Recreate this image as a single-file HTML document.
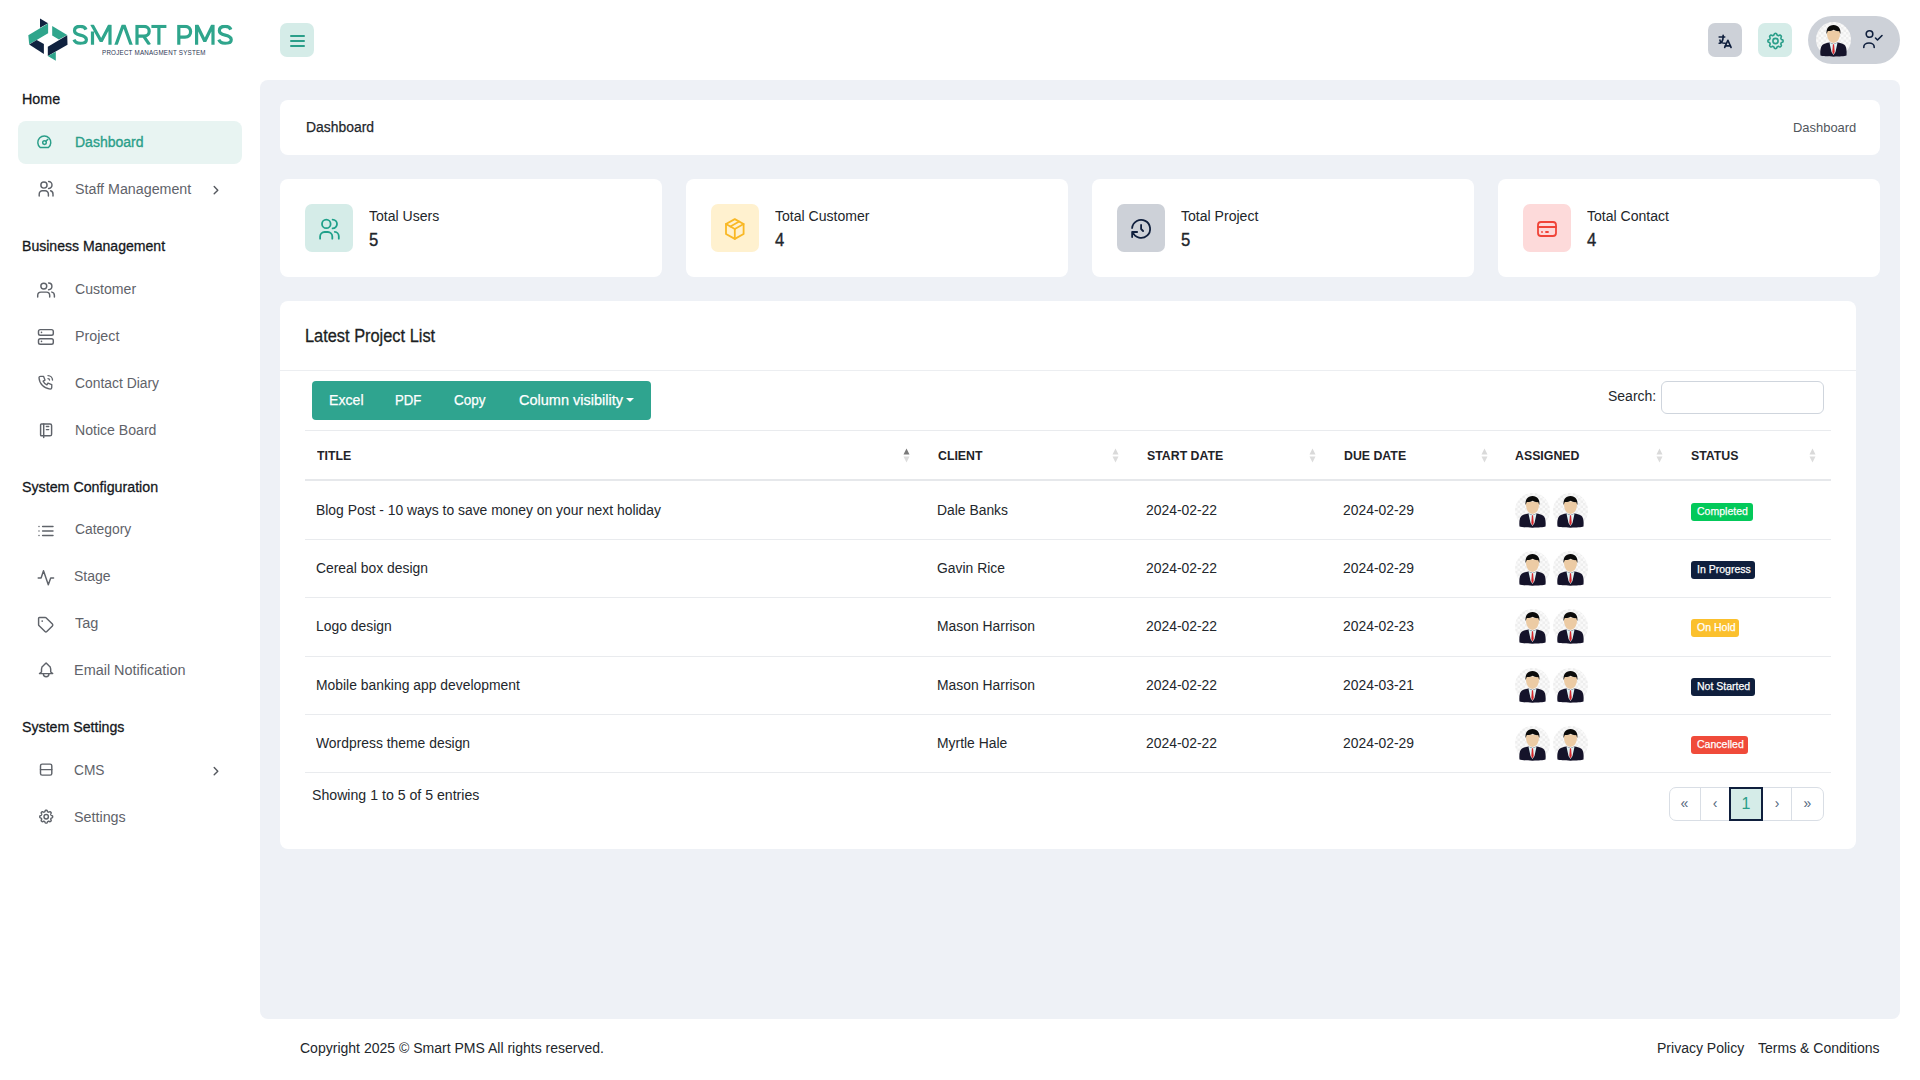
<!DOCTYPE html>
<html>
<head>
<meta charset="utf-8">
<style>
*{box-sizing:border-box;margin:0;padding:0}
html,body{width:1920px;height:1080px;overflow:hidden;background:#fff;font-family:"Liberation Sans",sans-serif;color:#212529}
.abs{position:absolute}
.t{position:absolute;white-space:nowrap;line-height:normal;transform-origin:0 0}
svg.ic{fill:none;stroke:currentColor;stroke-linecap:round;stroke-linejoin:round}
.sec{position:absolute;left:22px;font-size:15px;line-height:18px;font-weight:400;-webkit-text-stroke:0.35px #15181c;color:#15181c;white-space:nowrap;letter-spacing:-0.5px}
.mi{position:absolute;left:18px;width:224px;height:43px;border-radius:8px}
.mi.act{background:#e8f4f2}
.mt{position:absolute;left:75px;font-size:15px;line-height:18px;white-space:nowrap;letter-spacing:-0.45px}
.hbtn{position:absolute;top:23px;width:34px;height:34px;border-radius:7px}
.main{position:absolute;left:260px;top:80px;width:1640px;height:939px;background:#eef1f6;border-radius:8px}
.card{position:absolute;background:#fff;border-radius:8px}
.stat .box{position:absolute;left:25px;top:25px;width:48px;height:48px;border-radius:7px}
.stat .box svg{position:absolute;left:0;top:0;width:48px;height:48px;stroke-width:1.8}
.stat .lbl{position:absolute;left:89px;top:27px;font-size:15px;line-height:18px;color:#22262b;white-space:nowrap;letter-spacing:-0.5px}
.stat .val{position:absolute;left:89px;top:52px;font-size:17px;line-height:20px;font-weight:400;-webkit-text-stroke:0.2px #22262b;color:#22262b}
.th{position:absolute;top:449px;font-size:12.5px;line-height:15px;font-weight:700;color:#1f2328;white-space:nowrap;letter-spacing:-0.2px}
.sort{position:absolute;top:447px;width:7px;height:16px}
.td{position:absolute;font-size:15px;line-height:18px;color:#23272c;white-space:nowrap;letter-spacing:-0.5px}
.hr{position:absolute;left:305px;width:1526px;height:1px;background:#e9ebee}
.badge{position:absolute;height:18px;border-radius:3px;color:#fff;font-size:11px;font-weight:400;-webkit-text-stroke:0.3px #fff;padding:0 5.5px;line-height:18px;white-space:nowrap;letter-spacing:-0.2px}
.av{position:absolute;width:35px;height:35px}
.pg{position:absolute;top:787px;height:34px;color:#51657a;font-size:14px;text-align:center;line-height:33px}
.foot{position:absolute;top:1040px;font-size:15px;line-height:18px;color:#23272c;white-space:nowrap;letter-spacing:-0.46px}
</style>
</head>
<body>
<svg width="0" height="0" style="position:absolute">
  <defs>
    <pattern id="chk" width="5" height="5" patternUnits="userSpaceOnUse">
      <rect width="5" height="5" fill="#fafafa"/>
      <rect width="2.5" height="2.5" fill="#eeeeee"/>
      <rect x="2.5" y="2.5" width="2.5" height="2.5" fill="#eeeeee"/>
    </pattern>
    <symbol id="avatar" viewBox="0 0 35 35">
      <circle cx="17.5" cy="17.5" r="17.5" fill="url(#chk)"/>
      <path d="M4.5 33.5 C4 29 4.5 24 7 22.5 C9 21.3 11 21 13.5 20.5 L17.5 22 L21.5 20.5 C24 21 26 21.3 28 22.5 C30.5 24 31 29 30.5 33.5 C27 35 8 35 4.5 33.5Z" fill="#15132a"/>
      <path d="M13.5 20.8 L17.5 22 L21.5 20.8 L19.5 30 L17.5 33 L15.5 30Z" fill="#dff3f5"/>
      <path d="M16.9 22.3 L18.1 22.3 L18.7 30 L17.5 32.5 L16.3 30Z" fill="#d8262b"/>
      <path d="M11 8.5C10.6 13 11.6 17.5 14.2 19.6C15.6 20.7 16.5 21 17.5 21C18.5 21 19.4 20.7 20.8 19.6C23.4 17.5 24.4 13 24 8.5Z" fill="#eccba4"/>
      <path d="M10.6 12C10 6.5 12.6 2.9 17.5 2.9C22.4 2.9 25 6.5 24.4 12C23.8 11 23.6 9.8 23.2 9C21.5 9.6 19 8.2 17.8 7.7C16 8.6 13.5 9.4 11.8 9C11.4 9.9 11 11 10.6 12Z" fill="#0b0b0b"/>
    </symbol>
  </defs>
</svg>
<svg class="abs" style="left:0;top:0" width="260" height="80" viewBox="0 0 260 80">
  <polygon points="40,18.6 48.1,23.3 40,27.8" fill="#10223f"/>
  <polygon points="48.1,23.6 48.1,33.3 36.7,40 29.2,44.2 28.3,35.3 40,28.3" fill="#2fa58c"/>
  <polygon points="29.2,44.4 36.7,40 43.9,43.9 43.9,53.9" fill="#10223f"/>
  <polygon points="52.2,26.1 67.2,35 58.9,39.4 52.2,35.6" fill="#2fa58c"/>
  <polygon points="67.2,35.3 67.5,44.7 47.8,56.1 47.8,46.7" fill="#10223f"/>
  <polygon points="47.8,56.1 55.8,51.7 55.8,60.8" fill="#2fa58c"/>
</svg>
<svg class="abs" style="left:0;top:0" width="260" height="80" viewBox="0 0 260 80" fill="none" stroke="#2fa58c" stroke-width="3.2"><defs><clipPath id="capc"><rect x="60" y="24.8" width="190" height="20"/></clipPath></defs><g clip-path="url(#capc)">
  <path d="M86 29.6C85.1 27.3 83.2 26.4 80.3 26.4C76.6 26.4 74.5 28.2 74.5 30.7C74.5 33.5 77.2 34.4 80.3 35.1C83.8 35.9 86.4 36.9 86.4 39.7C86.4 42.1 84.3 43.3 80.3 43.3C77 43.3 74.9 42.1 74 39.6"/>
  <path d="M92.5 46V31.5M91.6 24L101.2 41.2L110 24.5V46" stroke-linejoin="bevel"/>
  <path d="M115.6 46L123.6 24L131.5 46" stroke-linejoin="bevel"/>
  <path d="M137 46V26.4H144C147.4 26.4 149.2 28.6 149.2 31.2C149.2 33.9 147.4 36.1 144 36.1H137M143.6 36.1L149.6 44.8"/>
  <path d="M151.4 26.4H166.4M158.9 26.4V46"/>
  <path d="M178.8 46V26.4H185C188.7 26.4 190.6 28.8 190.6 31.8C190.6 34.8 188.7 37.2 185 37.2H178.8"/>
  <path d="M196.6 46V24.5L204.8 41.2L213 24.5V46" stroke-linejoin="bevel"/>
  <path d="M86 29.6C85.1 27.3 83.2 26.4 80.3 26.4C76.6 26.4 74.5 28.2 74.5 30.7C74.5 33.5 77.2 34.4 80.3 35.1C83.8 35.9 86.4 36.9 86.4 39.7C86.4 42.1 84.3 43.3 80.3 43.3C77 43.3 74.9 42.1 74 39.6" transform="translate(144.85 0)"/>
</svg>
<div class="abs" style="left:101.5px;top:47.5px;font-size:7.2px;line-height:9px;color:#2b3553;white-space:nowrap;letter-spacing:0.25px;transform:scaleX(0.868);transform-origin:0 0">PROJECT MANAGMENT SYSTEM</div>
<div class="t" style="left:22.18px;top:89.88px;font-size:15.5px;font-weight:400;-webkit-text-stroke:0.3px #15181c;color:#15181c;transform:scaleX(0.9225);">Home</div>
<div class="mi act" style="top:121px"></div>
<svg class="ic abs" style="left:32px;top:130px;stroke-width:1.45;color:#2a9e89" width="28" height="28" viewBox="0 0 28 28"><path d="M8.15 17.5A6.5 6.5 0 1 1 16.45 17.5Z"/><circle cx="12.5" cy="12.6" r="1.8"/><path d="M13.9 11.2L15.8 9.4"/></svg>
<div class="t" style="left:74.7px;top:133.13px;font-size:15.5px;font-weight:400;color:#2a9e89;transform:scaleX(0.9041);-webkit-text-stroke:0.35px #2a9e89;">Dashboard</div>
<div class="mi" style="top:168px"></div>
<svg class="ic abs" style="left:32px;top:176px;stroke-width:1.45;color:#5f636a" width="28" height="28" viewBox="0 0 28 28"><circle cx="11.95" cy="9" r="3.1"/><path d="M16.6 5.4a3.4 3.55 0 0 1 0 7.1"/><path d="M7.2 20v-1.8a3.2 3.4 0 0 1 3.2 -3.4h2.8a3.2 3.4 0 0 1 3.2 3.4v1.8"/><path d="M18.6 14.8a3 3.4 0 0 1 2.4 3.4v1.8"/></svg>
<div class="t" style="left:74.68px;top:179.88px;font-size:15.5px;font-weight:400;color:#5f636a;transform:scaleX(0.92);">Staff Management</div>
<svg class="ic abs" style="left:208px;top:182px;stroke-width:1.4;color:#55595f" width="16" height="16" viewBox="0 0 16 16"><path d="M6.2 4.5L9.8 8.2L6.2 11.8"/></svg>
<div class="t" style="left:22.19px;top:236.98px;font-size:15.5px;font-weight:400;-webkit-text-stroke:0.3px #15181c;color:#15181c;transform:scaleX(0.9076);">Business Management</div>
<div class="mi" style="top:268px"></div>
<svg class="ic abs" style="left:32px;top:276px;stroke-width:1.45;color:#5f636a" width="28" height="28" viewBox="0 0 28 28"><circle cx="11.8" cy="10.1" r="2.95"/><path d="M16.6 7a3.3 3.35 0 0 1 0 6.7"/><path d="M5.7 21v-1.6a3.3 3.3 0 0 1 3.3 -3.3h5.4a3.3 3.3 0 0 1 3.3 3.3v1.6"/><path d="M19.8 16.1a3 3.5 0 0 1 2.6 3.4v1.5"/></svg>
<div class="t" style="left:74.69px;top:280.38px;font-size:15.5px;font-weight:400;color:#5f636a;transform:scaleX(0.9091);">Customer</div>
<div class="mi" style="top:315px"></div>
<svg class="ic abs" style="left:32px;top:322px;stroke-width:1.45;color:#5f636a" width="28" height="28" viewBox="0 0 28 28"><rect x="6.5" y="7.6" width="14.8" height="5.7" rx="1.8"/><rect x="6.5" y="16.7" width="14.8" height="5.6" rx="1.8"/><path d="M9.5 10.4h.01M9.5 19.4h.01" stroke-width="1.6"/></svg>
<div class="t" style="left:74.68px;top:326.88px;font-size:15.5px;font-weight:400;color:#5f636a;transform:scaleX(0.9202);">Project</div>
<div class="mi" style="top:362px"></div>
<svg class="ic abs" style="left:32px;top:369px;stroke-width:1.45;color:#5f636a" width="28" height="28" viewBox="0 0 28 28"><g transform="translate(4.75 4.3) scale(0.75)" stroke-width="1.8"><path d="M5 4h4l2 5l-2.5 1.5a11 11 0 0 0 5 5l1.5 -2.5l5 2v4a2 2 0 0 1 -2 2a16 16 0 0 1 -15 -15a2 2 0 0 1 2 -2"/><path d="M15 7a2 2 0 0 1 2 2"/><path d="M15 3a6 6 0 0 1 6 6"/></g></svg>
<div class="t" style="left:74.6px;top:373.78px;font-size:15.5px;font-weight:400;color:#5f636a;transform:scaleX(0.8952);">Contact Diary</div>
<div class="mi" style="top:409px"></div>
<svg class="ic abs" style="left:32px;top:416px;stroke-width:1.45;color:#5f636a" width="28" height="28" viewBox="0 0 28 28"><path d="M9.4 7.9h8.6a1.6 1.6 0 0 1 1.6 1.6v8.7a1.6 1.6 0 0 1 -1.6 1.6h-8.6a0.8 0.8 0 0 1 -0.8 -0.8v-10.3a0.8 0.8 0 0 1 0.8 -0.8Z"/><path d="M11.7 7.9v13.5"/><path d="M14.4 10.5h2.3M14.4 13.6h2.3"/></svg>
<div class="t" style="left:74.69px;top:420.88px;font-size:15.5px;font-weight:400;color:#5f636a;transform:scaleX(0.9091);">Notice Board</div>
<div class="t" style="left:22.18px;top:478.08px;font-size:15.5px;font-weight:400;-webkit-text-stroke:0.3px #15181c;color:#15181c;transform:scaleX(0.9184);">System Configuration</div>
<div class="mi" style="top:508px"></div>
<svg class="ic abs" style="left:32px;top:515px;stroke-width:1.45;color:#5f636a" width="28" height="28" viewBox="0 0 28 28"><path d="M10.6 11.4h10.4M10.6 15.9h10.4M10.6 20.5h10.4M7 11.4h.01M7 15.9h.01M7 20.5h.01"/></svg>
<div class="t" style="left:74.7px;top:520.38px;font-size:15.5px;font-weight:400;color:#5f636a;transform:scaleX(0.8952);">Category</div>
<div class="mi" style="top:555px"></div>
<svg class="ic abs" style="left:32px;top:562px;stroke-width:1.45;color:#5f636a" width="28" height="28" viewBox="0 0 28 28"><path d="M6.2 15.9h2.9l2.4 -7.1l4.8 14l2.4 -6.9h2.9"/></svg>
<div class="t" style="left:74.29px;top:567.38px;font-size:15.5px;font-weight:400;color:#5f636a;transform:scaleX(0.9051);">Stage</div>
<div class="mi" style="top:602px"></div>
<svg class="ic abs" style="left:32px;top:609px;stroke-width:1.45;color:#5f636a" width="28" height="28" viewBox="0 0 28 28"><path d="M6.6 9.2a0.8 0.8 0 0 1 0.8 -0.8h5.9a1 1 0 0 1 0.7 0.3l6.4 6.4a1.3 1.3 0 0 1 0 1.8l-5.6 5.6a1.3 1.3 0 0 1 -1.8 0l-6.1 -6.1a1 1 0 0 1 -0.3 -0.7Z"/><path d="M10.2 12.1h.01" stroke-width="1.7"/></svg>
<div class="t" style="left:75.2px;top:614.38px;font-size:15.5px;font-weight:400;color:#5f636a;transform:scaleX(0.9333);">Tag</div>
<div class="mi" style="top:649px"></div>
<svg class="ic abs" style="left:32px;top:656px;stroke-width:1.45;color:#5f636a" width="28" height="28" viewBox="0 0 28 28"><path d="M14.1 6.9L11.7 9.3C10.2 10.1 9.5 11.3 9.5 13V16L7.5 17.6H20.7L18.7 16V13C18.7 11.3 18 10.1 16.5 9.3Z"/><path d="M11.4 17.9a2.75 2.75 0 0 0 5.5 0"/></svg>
<div class="t" style="left:74.27px;top:661.38px;font-size:15.5px;font-weight:400;color:#5f636a;transform:scaleX(0.9314);">Email Notification</div>
<div class="t" style="left:22.09px;top:718.48px;font-size:15.5px;font-weight:400;-webkit-text-stroke:0.3px #15181c;color:#15181c;transform:scaleX(0.9144);">System Settings</div>
<div class="mi" style="top:749px"></div>
<svg class="ic abs" style="left:32px;top:756px;stroke-width:1.45;color:#5f636a" width="28" height="28" viewBox="0 0 28 28"><rect x="8.5" y="8.1" width="11.3" height="11" rx="1.7"/><path d="M8.5 13.6h11.3"/></svg>
<div class="t" style="left:74.32px;top:761.38px;font-size:15.5px;font-weight:400;color:#5f636a;transform:scaleX(0.8848);">CMS</div>
<svg class="ic abs" style="left:208px;top:763px;stroke-width:1.4;color:#55595f" width="16" height="16" viewBox="0 0 16 16"><path d="M6.2 4.5L9.8 8.2L6.2 11.8"/></svg>
<div class="mi" style="top:796px"></div>
<svg class="ic abs" style="left:32px;top:803px;stroke-width:1.45;color:#5f636a" width="28" height="28" viewBox="0 0 28 28"><path d="M14.20 7.25 L14.62 7.28 L15.02 7.45 L15.33 8.04 L15.56 8.64 L15.84 8.85 L16.15 8.99 L16.46 9.11 L16.82 9.16 L17.41 8.90 L18.04 8.70 L18.44 8.86 L18.76 9.14 L19.04 9.46 L19.20 9.86 L19.00 10.49 L18.74 11.08 L18.79 11.44 L18.91 11.75 L19.05 12.06 L19.26 12.34 L19.86 12.57 L20.45 12.88 L20.62 13.28 L20.65 13.70 L20.62 14.12 L20.45 14.52 L19.86 14.83 L19.26 15.06 L19.05 15.34 L18.91 15.65 L18.79 15.96 L18.74 16.32 L19.00 16.91 L19.20 17.54 L19.04 17.94 L18.76 18.26 L18.44 18.54 L18.04 18.70 L17.41 18.50 L16.82 18.24 L16.46 18.29 L16.15 18.41 L15.84 18.55 L15.56 18.76 L15.33 19.36 L15.02 19.95 L14.62 20.12 L14.20 20.15 L13.78 20.12 L13.38 19.95 L13.07 19.36 L12.84 18.76 L12.56 18.55 L12.25 18.41 L11.94 18.29 L11.58 18.24 L10.99 18.50 L10.36 18.70 L9.96 18.54 L9.64 18.26 L9.36 17.94 L9.20 17.54 L9.40 16.91 L9.66 16.32 L9.61 15.96 L9.49 15.65 L9.35 15.34 L9.14 15.06 L8.54 14.83 L7.95 14.52 L7.78 14.12 L7.75 13.70 L7.78 13.28 L7.95 12.88 L8.54 12.57 L9.14 12.34 L9.35 12.06 L9.49 11.75 L9.61 11.44 L9.66 11.08 L9.40 10.49 L9.20 9.86 L9.36 9.46 L9.64 9.14 L9.96 8.86 L10.36 8.70 L10.99 8.90 L11.58 9.16 L11.94 9.11 L12.25 8.99 L12.56 8.85 L12.84 8.64 L13.07 8.04 L13.38 7.45 L13.78 7.28Z"/><circle cx="14.2" cy="13.7" r="2.2"/></svg>
<div class="t" style="left:74.28px;top:808.38px;font-size:15.5px;font-weight:400;color:#5f636a;transform:scaleX(0.9236);">Settings</div>
<div class="hbtn" style="left:280px;background:#d5ece8">
  <div class="abs" style="left:10px;top:12px;width:15px;height:2px;background:#2a9e89;border-radius:1px"></div>
  <div class="abs" style="left:10px;top:17px;width:15px;height:2px;background:#2a9e89;border-radius:1px"></div>
  <div class="abs" style="left:10px;top:22px;width:15px;height:2px;background:#2a9e89;border-radius:1px"></div>
</div>
<div class="hbtn" style="left:1708px;background:#cdd1d8;color:#0f1f3d">
  <svg class="ic abs" style="left:7.5px;top:10px;stroke-width:2.1" width="19" height="19" viewBox="0 0 24 24"><path d="M4 5h7"/><path d="M9 3v2c0 4.418 -2.239 8 -5 8"/><path d="M5 9c0 2.144 2.952 3.908 6.7 4"/><g transform="translate(-1 -1.8)"><path d="M12 20l4 -9l4 9"/><path d="M19.1 18h-6.2"/></g></svg>
</div>
<div class="hbtn" style="left:1758px;background:#d5ece8;color:#2a9e89">
  <svg class="ic abs" style="left:0;top:0;stroke-width:1.6" width="34" height="34" viewBox="0 0 34 34"><path d="M17.50 10.40 L18.00 10.44 L18.47 10.63 L18.83 11.33 L19.10 12.04 L19.44 12.30 L19.80 12.46 L20.16 12.60 L20.58 12.66 L21.28 12.35 L22.02 12.10 L22.50 12.30 L22.87 12.63 L23.20 13.00 L23.40 13.48 L23.15 14.22 L22.84 14.92 L22.90 15.34 L23.04 15.70 L23.20 16.06 L23.46 16.40 L24.17 16.67 L24.87 17.03 L25.06 17.50 L25.10 18.00 L25.06 18.50 L24.87 18.97 L24.17 19.33 L23.46 19.60 L23.20 19.94 L23.04 20.30 L22.90 20.66 L22.84 21.08 L23.15 21.78 L23.40 22.52 L23.20 23.00 L22.87 23.37 L22.50 23.70 L22.02 23.90 L21.28 23.65 L20.58 23.34 L20.16 23.40 L19.80 23.54 L19.44 23.70 L19.10 23.96 L18.83 24.67 L18.47 25.37 L18.00 25.56 L17.50 25.60 L17.00 25.56 L16.53 25.37 L16.17 24.67 L15.90 23.96 L15.56 23.70 L15.20 23.54 L14.84 23.40 L14.42 23.34 L13.72 23.65 L12.98 23.90 L12.50 23.70 L12.13 23.37 L11.80 23.00 L11.60 22.52 L11.85 21.78 L12.16 21.08 L12.10 20.66 L11.96 20.30 L11.80 19.94 L11.54 19.60 L10.83 19.33 L10.13 18.97 L9.94 18.50 L9.90 18.00 L9.94 17.50 L10.13 17.03 L10.83 16.67 L11.54 16.40 L11.80 16.06 L11.96 15.70 L12.10 15.34 L12.16 14.92 L11.85 14.22 L11.60 13.48 L11.80 13.00 L12.13 12.63 L12.50 12.30 L12.98 12.10 L13.72 12.35 L14.42 12.66 L14.84 12.60 L15.20 12.46 L15.56 12.30 L15.90 12.04 L16.17 11.33 L16.53 10.63 L17.00 10.44Z"/><circle cx="17.5" cy="18" r="2.6"/></svg>
</div>
<div class="abs" style="left:1808px;top:16px;width:92px;height:48px;border-radius:24px;background:#cdd1d8"></div>
<svg class="abs" style="left:1816px;top:22px" width="35" height="35"><use href="#avatar"/></svg>
<svg class="ic abs" style="left:1862px;top:28px;stroke-width:1.6;color:#0f1f3d" width="24" height="24" viewBox="0 0 24 24"><circle cx="7.5" cy="6" r="3.3"/><path d="M1.8 19.5v-0.5a5.2 4 0 0 1 10.4 0v0.5"/><path d="M13.5 10l2 2l4.5 -4.5"/></svg>
<div class="main"></div>
<div class="card" style="left:280px;top:100px;width:1600px;height:55px"></div>
<div class="t" style="left:305.5px;top:118.08px;font-size:15.5px;font-weight:400;-webkit-text-stroke:0.25px #23272c;color:#23272c;transform:scaleX(0.8973);">Dashboard</div>
<div class="t" style="left:1792.54px;top:120.25px;font-size:13.5px;font-weight:400;color:#51565c;transform:scaleX(0.9578);">Dashboard</div>
<div class="card stat" style="left:280px;top:179px;width:382px;height:98px">
  <div class="box" style="background:#d5ece8;color:#1fa08a"><svg class="ic" viewBox="0 0 48 48"><circle cx="21.3" cy="19.9" r="4.3"/><path d="M27.6 15.6a4.4 4.4 0 0 1 0 8.8"/><path d="M15.1 34.7v-2.2a4.5 4.5 0 0 1 4.5 -4.5h3.2a4.5 4.5 0 0 1 4.5 4.5v2.2"/><path d="M29.8 27.8a4.3 4.5 0 0 1 4 4.5v2.4"/></svg></div>
</div>
<div class="t" style="left:369.2px;top:206.78px;font-size:15.5px;font-weight:400;color:#22262b;transform:scaleX(0.9065);">Total Users</div>
<div class="t" style="left:368.89px;top:230.31px;font-size:17.5px;font-weight:400;-webkit-text-stroke:0.35px #22262b;color:#22262b;transform:scaleX(0.95);">5</div>
<div class="card stat" style="left:686px;top:179px;width:382px;height:98px">
  <div class="box" style="background:#fff1cf;color:#f9b825"><svg class="ic" viewBox="0 0 48 48"><g transform="translate(10.6 11.8) scale(1.1)" stroke-width="1.64"><path d="M12 3l8 4.5l0 9l-8 4.5l-8 -4.5l0 -9l8 -4.5"/><path d="M12 12l8 -4.5"/><path d="M12 12l0 9"/><path d="M12 12l-8 -4.5"/><path d="M16 5.25l-8 4.5"/></g></svg></div>
</div>
<div class="t" style="left:775.2px;top:206.78px;font-size:15.5px;font-weight:400;color:#22262b;transform:scaleX(0.9065);">Total Customer</div>
<div class="t" style="left:774.89px;top:230.31px;font-size:17.5px;font-weight:400;-webkit-text-stroke:0.35px #22262b;color:#22262b;transform:scaleX(0.95);">4</div>
<div class="card stat" style="left:1092px;top:179px;width:382px;height:98px">
  <div class="box" style="background:#cdd1d8;color:#0f1f3d"><svg class="ic" viewBox="0 0 48 48"><g transform="translate(12.1 13)"><path d="M12 8l0 4l2 2"/><path d="M3.05 11a9 9 0 1 1 .5 4m-.5 5v-5h5"/></g></svg></div>
</div>
<div class="t" style="left:1181.2px;top:206.78px;font-size:15.5px;font-weight:400;color:#22262b;transform:scaleX(0.9065);">Total Project</div>
<div class="t" style="left:1180.89px;top:230.31px;font-size:17.5px;font-weight:400;-webkit-text-stroke:0.35px #22262b;color:#22262b;transform:scaleX(0.95);">5</div>
<div class="card stat" style="left:1498px;top:179px;width:382px;height:98px">
  <div class="box" style="background:#fddada;color:#f04438"><svg class="ic" viewBox="0 0 48 48"><g transform="translate(12 13)"><path d="M3 5m0 3a3 3 0 0 1 3 -3h12a3 3 0 0 1 3 3v8a3 3 0 0 1 -3 3h-12a3 3 0 0 1 -3 -3z"/><path d="M3 10l18 0"/><path d="M7 15l.01 0"/><path d="M11 15l2 0"/></g></svg></div>
</div>
<div class="t" style="left:1587.2px;top:206.78px;font-size:15.5px;font-weight:400;color:#22262b;transform:scaleX(0.9065);">Total Contact</div>
<div class="t" style="left:1586.89px;top:230.31px;font-size:17.5px;font-weight:400;-webkit-text-stroke:0.35px #22262b;color:#22262b;transform:scaleX(0.95);">4</div>
<div class="card" style="left:280px;top:301px;width:1576px;height:548px"></div>
<div class="abs" style="left:280px;top:370px;width:1576px;height:1px;background:#eceef1"></div>
<div class="abs" style="left:312px;top:381px;width:339px;height:39px;background:#2fa48f;border-radius:4px"></div>
<div class="abs" style="left:626px;top:398px;width:0;height:0;border-left:4px solid transparent;border-right:4px solid transparent;border-top:4px solid #fff"></div>
<div class="abs" style="left:1661px;top:381px;width:163px;height:33px;border:1px solid #cfd5dd;border-radius:6px;background:#fff"></div>
<div class="hr" style="top:430px"></div>
<div class="hr" style="top:479px;height:2px;background:#e6e8eb"></div>
<div class="t" style="left:305.26px;top:325.61px;font-size:17.5px;font-weight:400;-webkit-text-stroke:0.3px #1c1f23;color:#1c1f23;transform:scaleX(0.9355);">Latest Project List</div>
<div class="t" style="left:328.99px;top:390.98px;font-size:15.5px;font-weight:400;-webkit-text-stroke:0.25px #ffffff;color:#ffffff;transform:scaleX(0.9111);">Excel</div>
<div class="t" style="left:395.45px;top:390.98px;font-size:15.5px;font-weight:400;-webkit-text-stroke:0.25px #ffffff;color:#ffffff;transform:scaleX(0.85);">PDF</div>
<div class="t" style="left:454.23px;top:390.98px;font-size:15.5px;font-weight:400;-webkit-text-stroke:0.25px #ffffff;color:#ffffff;transform:scaleX(0.8722);">Copy</div>
<div class="t" style="left:518.76px;top:390.98px;font-size:15.5px;font-weight:400;-webkit-text-stroke:0.25px #ffffff;color:#ffffff;transform:scaleX(0.9355);">Column visibility</div>
<div class="t" style="left:1607.7px;top:386.88px;font-size:15.5px;font-weight:400;color:#23272c;transform:scaleX(0.902);">Search:</div>
<div class="t" style="left:317.2px;top:448.25px;font-size:13.5px;font-weight:700;color:#1f2328;transform:scaleX(0.9135);">TITLE</div>
<svg class="sort" style="left:903px" viewBox="0 0 7 16"><path d="M0.5 7.5L3.5 1.5L6.5 7.5Z" fill="#7a7a7a"/><path d="M0.5 9.5L3.5 15.5L6.5 9.5Z" fill="#dcdcdc"/></svg>
<div class="t" style="left:937.8px;top:448.25px;font-size:13.5px;font-weight:700;color:#1f2328;transform:scaleX(0.9135);">CLIENT</div>
<svg class="sort" style="left:1112px" viewBox="0 0 7 16"><path d="M0.5 7.5L3.5 1.5L6.5 7.5Z" fill="#d9d9d9"/><path d="M0.5 9.5L3.5 15.5L6.5 9.5Z" fill="#dcdcdc"/></svg>
<div class="t" style="left:1146.5px;top:448.25px;font-size:13.5px;font-weight:700;color:#1f2328;transform:scaleX(0.9135);">START DATE</div>
<svg class="sort" style="left:1309px" viewBox="0 0 7 16"><path d="M0.5 7.5L3.5 1.5L6.5 7.5Z" fill="#d9d9d9"/><path d="M0.5 9.5L3.5 15.5L6.5 9.5Z" fill="#dcdcdc"/></svg>
<div class="t" style="left:1343.5px;top:448.25px;font-size:13.5px;font-weight:700;color:#1f2328;transform:scaleX(0.9135);">DUE DATE</div>
<svg class="sort" style="left:1481px" viewBox="0 0 7 16"><path d="M0.5 7.5L3.5 1.5L6.5 7.5Z" fill="#d9d9d9"/><path d="M0.5 9.5L3.5 15.5L6.5 9.5Z" fill="#dcdcdc"/></svg>
<div class="t" style="left:1515px;top:448.25px;font-size:13.5px;font-weight:700;color:#1f2328;transform:scaleX(0.9135);">ASSIGNED</div>
<svg class="sort" style="left:1656px" viewBox="0 0 7 16"><path d="M0.5 7.5L3.5 1.5L6.5 7.5Z" fill="#d9d9d9"/><path d="M0.5 9.5L3.5 15.5L6.5 9.5Z" fill="#dcdcdc"/></svg>
<div class="t" style="left:1691px;top:448.25px;font-size:13.5px;font-weight:700;color:#1f2328;transform:scaleX(0.9135);">STATUS</div>
<svg class="sort" style="left:1809px" viewBox="0 0 7 16"><path d="M0.5 7.5L3.5 1.5L6.5 7.5Z" fill="#d9d9d9"/><path d="M0.5 9.5L3.5 15.5L6.5 9.5Z" fill="#dcdcdc"/></svg>
<div class="t" style="left:316.13px;top:500.98px;font-size:15.5px;font-weight:400;color:#23272c;transform:scaleX(0.8958);">Blog Post - 10 ways to save money on your next holiday</div>
<div class="t" style="left:936.9px;top:500.98px;font-size:15.5px;font-weight:400;color:#23272c;transform:scaleX(0.8958);">Dale Banks</div>
<div class="t" style="left:1145.6px;top:500.98px;font-size:15.5px;font-weight:400;color:#23272c;transform:scaleX(0.8958);">2024-02-22</div>
<div class="t" style="left:1342.6px;top:500.98px;font-size:15.5px;font-weight:400;color:#23272c;transform:scaleX(0.8958);">2024-02-29</div>
<svg class="av" style="left:1515px;top:493px"><use href="#avatar"/></svg>
<svg class="av" style="left:1553px;top:493px"><use href="#avatar"/></svg>
<div class="abs" style="left:1691px;top:503px;width:62px;height:18px;border-radius:3px;background:#03c95a"></div>
<div class="t" style="left:1696.7px;top:504.81px;font-size:11.5px;font-weight:400;-webkit-text-stroke:0.25px #ffffff;color:#ffffff;transform:scaleX(0.9145);">Completed</div>
<div class="hr" style="top:539px"></div>
<div class="t" style="left:316.13px;top:558.98px;font-size:15.5px;font-weight:400;color:#23272c;transform:scaleX(0.8958);">Cereal box design</div>
<div class="t" style="left:936.9px;top:558.98px;font-size:15.5px;font-weight:400;color:#23272c;transform:scaleX(0.8958);">Gavin Rice</div>
<div class="t" style="left:1145.6px;top:558.98px;font-size:15.5px;font-weight:400;color:#23272c;transform:scaleX(0.8958);">2024-02-22</div>
<div class="t" style="left:1342.6px;top:558.98px;font-size:15.5px;font-weight:400;color:#23272c;transform:scaleX(0.8958);">2024-02-29</div>
<svg class="av" style="left:1515px;top:551px"><use href="#avatar"/></svg>
<svg class="av" style="left:1553px;top:551px"><use href="#avatar"/></svg>
<div class="abs" style="left:1691px;top:561px;width:64px;height:18px;border-radius:3px;background:#0f1f3d"></div>
<div class="t" style="left:1696.7px;top:562.81px;font-size:11.5px;font-weight:400;-webkit-text-stroke:0.25px #ffffff;color:#ffffff;transform:scaleX(0.9145);">In Progress</div>
<div class="hr" style="top:597px"></div>
<div class="t" style="left:316.13px;top:616.98px;font-size:15.5px;font-weight:400;color:#23272c;transform:scaleX(0.8958);">Logo design</div>
<div class="t" style="left:936.9px;top:616.98px;font-size:15.5px;font-weight:400;color:#23272c;transform:scaleX(0.8958);">Mason Harrison</div>
<div class="t" style="left:1145.6px;top:616.98px;font-size:15.5px;font-weight:400;color:#23272c;transform:scaleX(0.8958);">2024-02-22</div>
<div class="t" style="left:1342.6px;top:616.98px;font-size:15.5px;font-weight:400;color:#23272c;transform:scaleX(0.8958);">2024-02-23</div>
<svg class="av" style="left:1515px;top:609px"><use href="#avatar"/></svg>
<svg class="av" style="left:1553px;top:609px"><use href="#avatar"/></svg>
<div class="abs" style="left:1691px;top:619px;width:48px;height:18px;border-radius:3px;background:#fbc02d"></div>
<div class="t" style="left:1696.7px;top:620.81px;font-size:11.5px;font-weight:400;-webkit-text-stroke:0.25px #ffffff;color:#ffffff;transform:scaleX(0.9145);">On Hold</div>
<div class="hr" style="top:656px"></div>
<div class="t" style="left:316.13px;top:675.98px;font-size:15.5px;font-weight:400;color:#23272c;transform:scaleX(0.8958);">Mobile banking app development</div>
<div class="t" style="left:936.9px;top:675.98px;font-size:15.5px;font-weight:400;color:#23272c;transform:scaleX(0.8958);">Mason Harrison</div>
<div class="t" style="left:1145.6px;top:675.98px;font-size:15.5px;font-weight:400;color:#23272c;transform:scaleX(0.8958);">2024-02-22</div>
<div class="t" style="left:1342.6px;top:675.98px;font-size:15.5px;font-weight:400;color:#23272c;transform:scaleX(0.8958);">2024-03-21</div>
<svg class="av" style="left:1515px;top:668px"><use href="#avatar"/></svg>
<svg class="av" style="left:1553px;top:668px"><use href="#avatar"/></svg>
<div class="abs" style="left:1691px;top:678px;width:64px;height:18px;border-radius:3px;background:#0f1f3d"></div>
<div class="t" style="left:1696.7px;top:679.81px;font-size:11.5px;font-weight:400;-webkit-text-stroke:0.25px #ffffff;color:#ffffff;transform:scaleX(0.9145);">Not Started</div>
<div class="hr" style="top:714px"></div>
<div class="t" style="left:316.13px;top:733.98px;font-size:15.5px;font-weight:400;color:#23272c;transform:scaleX(0.8958);">Wordpress theme design</div>
<div class="t" style="left:936.9px;top:733.98px;font-size:15.5px;font-weight:400;color:#23272c;transform:scaleX(0.8958);">Myrtle Hale</div>
<div class="t" style="left:1145.6px;top:733.98px;font-size:15.5px;font-weight:400;color:#23272c;transform:scaleX(0.8958);">2024-02-22</div>
<div class="t" style="left:1342.6px;top:733.98px;font-size:15.5px;font-weight:400;color:#23272c;transform:scaleX(0.8958);">2024-02-29</div>
<svg class="av" style="left:1515px;top:726px"><use href="#avatar"/></svg>
<svg class="av" style="left:1553px;top:726px"><use href="#avatar"/></svg>
<div class="abs" style="left:1691px;top:736px;width:57px;height:18px;border-radius:3px;background:#f04b3a"></div>
<div class="t" style="left:1696.7px;top:737.81px;font-size:11.5px;font-weight:400;-webkit-text-stroke:0.25px #ffffff;color:#ffffff;transform:scaleX(0.9145);">Cancelled</div>
<div class="hr" style="top:772px"></div>
<div class="t" style="left:311.69px;top:786.28px;font-size:15.5px;font-weight:400;color:#23272c;transform:scaleX(0.9121);">Showing 1 to 5 of 5 entries</div>
<div class="abs" style="left:1669px;top:787px;width:155px;height:34px;border:1px solid #d9dee5;border-radius:7px;background:#fff"></div>
<div class="abs" style="left:1700px;top:788px;width:1px;height:32px;background:#d9dee5"></div>
<div class="abs" style="left:1791px;top:788px;width:1px;height:32px;background:#d9dee5"></div>
<div class="pg" style="left:1669px;width:31px">&laquo;</div>
<div class="pg" style="left:1700px;width:30px">&lsaquo;</div>
<div class="abs" style="left:1729px;top:787px;width:34px;height:34px;border:2px solid #0f1f3d;background:#d5ece8;color:#2a9e89;font-size:16px;text-align:center;line-height:30px">1</div>
<div class="pg" style="left:1763px;width:28px">&rsaquo;</div>
<div class="pg" style="left:1791px;width:33px">&raquo;</div>
<div class="t" style="left:299.7px;top:1038.78px;font-size:15.5px;font-weight:400;color:#23272c;transform:scaleX(0.9042);">Copyright 2025 &copy; Smart PMS All rights reserved.</div>
<div class="t" style="left:1656.6px;top:1038.78px;font-size:15.5px;font-weight:400;color:#23272c;transform:scaleX(0.9042);">Privacy Policy</div>
<div class="t" style="left:1758.0px;top:1038.78px;font-size:15.5px;font-weight:400;color:#23272c;transform:scaleX(0.9042);">Terms &amp; Conditions</div>
</body>
</html>
